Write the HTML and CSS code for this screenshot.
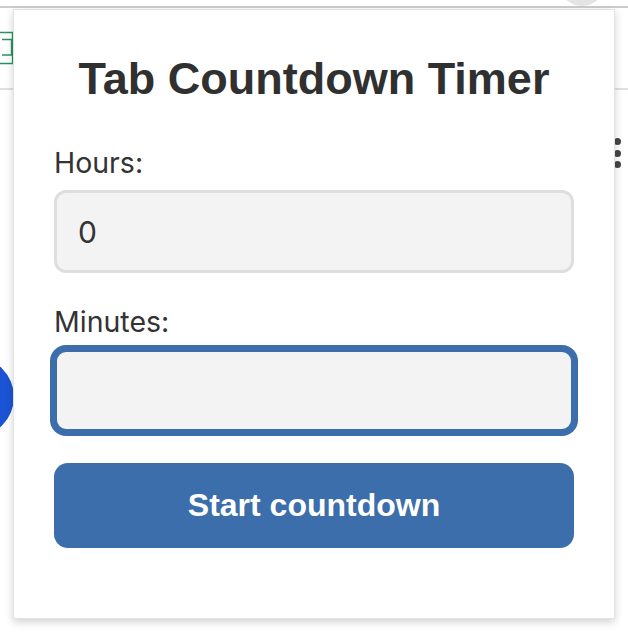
FILE: index.html
```html
<!DOCTYPE html>
<html lang="en">
<head>
<meta charset="utf-8">
<title>Tab Countdown Timer</title>
<link rel="stylesheet" href="styles.css">
</head>
<body>
<div class="backdrop">
  <div class="top-line"></div>
  <div class="avatar"></div>
  <div class="rule"></div>
  <svg class="sheet-icon" width="14" height="34" viewBox="0 0 14 34">
    <path d="M0 1.5 H12.5 V32.5 H0" fill="none" stroke="#2a9460" stroke-width="1.3"/>
    <path d="M2 8.5 H11.5 V24 H2" fill="none" stroke="#2a9460" stroke-width="1.3"/>
  </svg>
  <div class="blue-dot"></div>
  <div class="kebab"><span></span><span></span><span></span></div>
</div>

<div class="popup">
  <h1 class="title">Tab Countdown Timer</h1>
  <form class="form">
    <label class="label" for="hours">Hours:</label>
    <input class="field" id="hours" type="text" value="0">
    <label class="label label-gap" for="minutes">Minutes:</label>
    <input class="field field-focus" id="minutes" type="text" value="">
    <button class="start" type="button">Start countdown</button>
  </form>
</div>
</body>
</html>
```

FILE: styles.css
```css
html, body {
  margin: 0;
  padding: 0;
  background: #ffffff;
  width: 628px;
  height: 636px;
  overflow: hidden;
}

.backdrop {
  position: absolute;
  inset: 0;
}

.top-line {
  position: absolute;
  left: 0;
  right: 0;
  top: 6px;
  height: 2px;
  background: #cccccc;
}

.avatar {
  position: absolute;
  left: 559px;
  top: -40px;
  width: 46px;
  height: 46px;
  border-radius: 50%;
  background: #e4e4e4;
}

.rule {
  position: absolute;
  left: 0;
  right: 0;
  top: 88px;
  height: 2px;
  background: #e0e0e0;
}

.sheet-icon {
  position: absolute;
  left: 0;
  top: 31px;
}

.blue-dot {
  position: absolute;
  left: -66px;
  top: 357px;
  width: 80px;
  height: 80px;
  border-radius: 50%;
  background: #1a54d4;
}

.kebab {
  position: absolute;
  left: 614px;
  top: 138px;
  display: flex;
  flex-direction: column;
  gap: 4.5px;
}

.kebab span {
  display: block;
  width: 7px;
  height: 7px;
  border-radius: 50%;
  background: #454545;
}

.popup {
  position: absolute;
  left: 13px;
  top: 9px;
  width: 602px;
  height: 610px;
  box-sizing: border-box;
  background: #ffffff;
  border: 1px solid #e2e2e2;
  box-shadow: 0 3px 8px rgba(0, 0, 0, 0.18);
  padding: 42px 40px 0 40px;
}

.title {
  margin: 0;
  font-family: "Liberation Sans", Arial, sans-serif;
  font-weight: 700;
  font-size: 45px;
  line-height: 54px;
  text-align: center;
  color: #303030;
}

.form {
  display: flex;
  flex-direction: column;
  margin-top: 40px;
}

.label {
  font-family: Inter, "Liberation Sans", sans-serif;
  font-size: 28.5px;
  line-height: 34px;
  color: #333333;
  margin-bottom: 10px;
}

.label-gap {
  margin-top: 32px;
}

.field {
  box-sizing: border-box;
  height: 83px;
  width: 100%;
  margin: 0;
  padding: 0 21px;
  border: 3px solid #dedede;
  border-radius: 12px;
  background: #f3f3f3;
  font-family: Inter, "Liberation Sans", sans-serif;
  font-size: 30px;
  color: #333333;
  outline: none;
}

.field-focus {
  border-color: #3b6eaa;
  box-shadow: 0 0 0 4px #3b6eaa;
}

.start {
  margin-top: 31px;
  height: 85px;
  width: 100%;
  border: none;
  border-radius: 14px;
  background: #3b6eaa;
  color: #ffffff;
  font-family: "Liberation Sans", Arial, sans-serif;
  font-weight: 700;
  font-size: 32px;
  cursor: pointer;
}
```
